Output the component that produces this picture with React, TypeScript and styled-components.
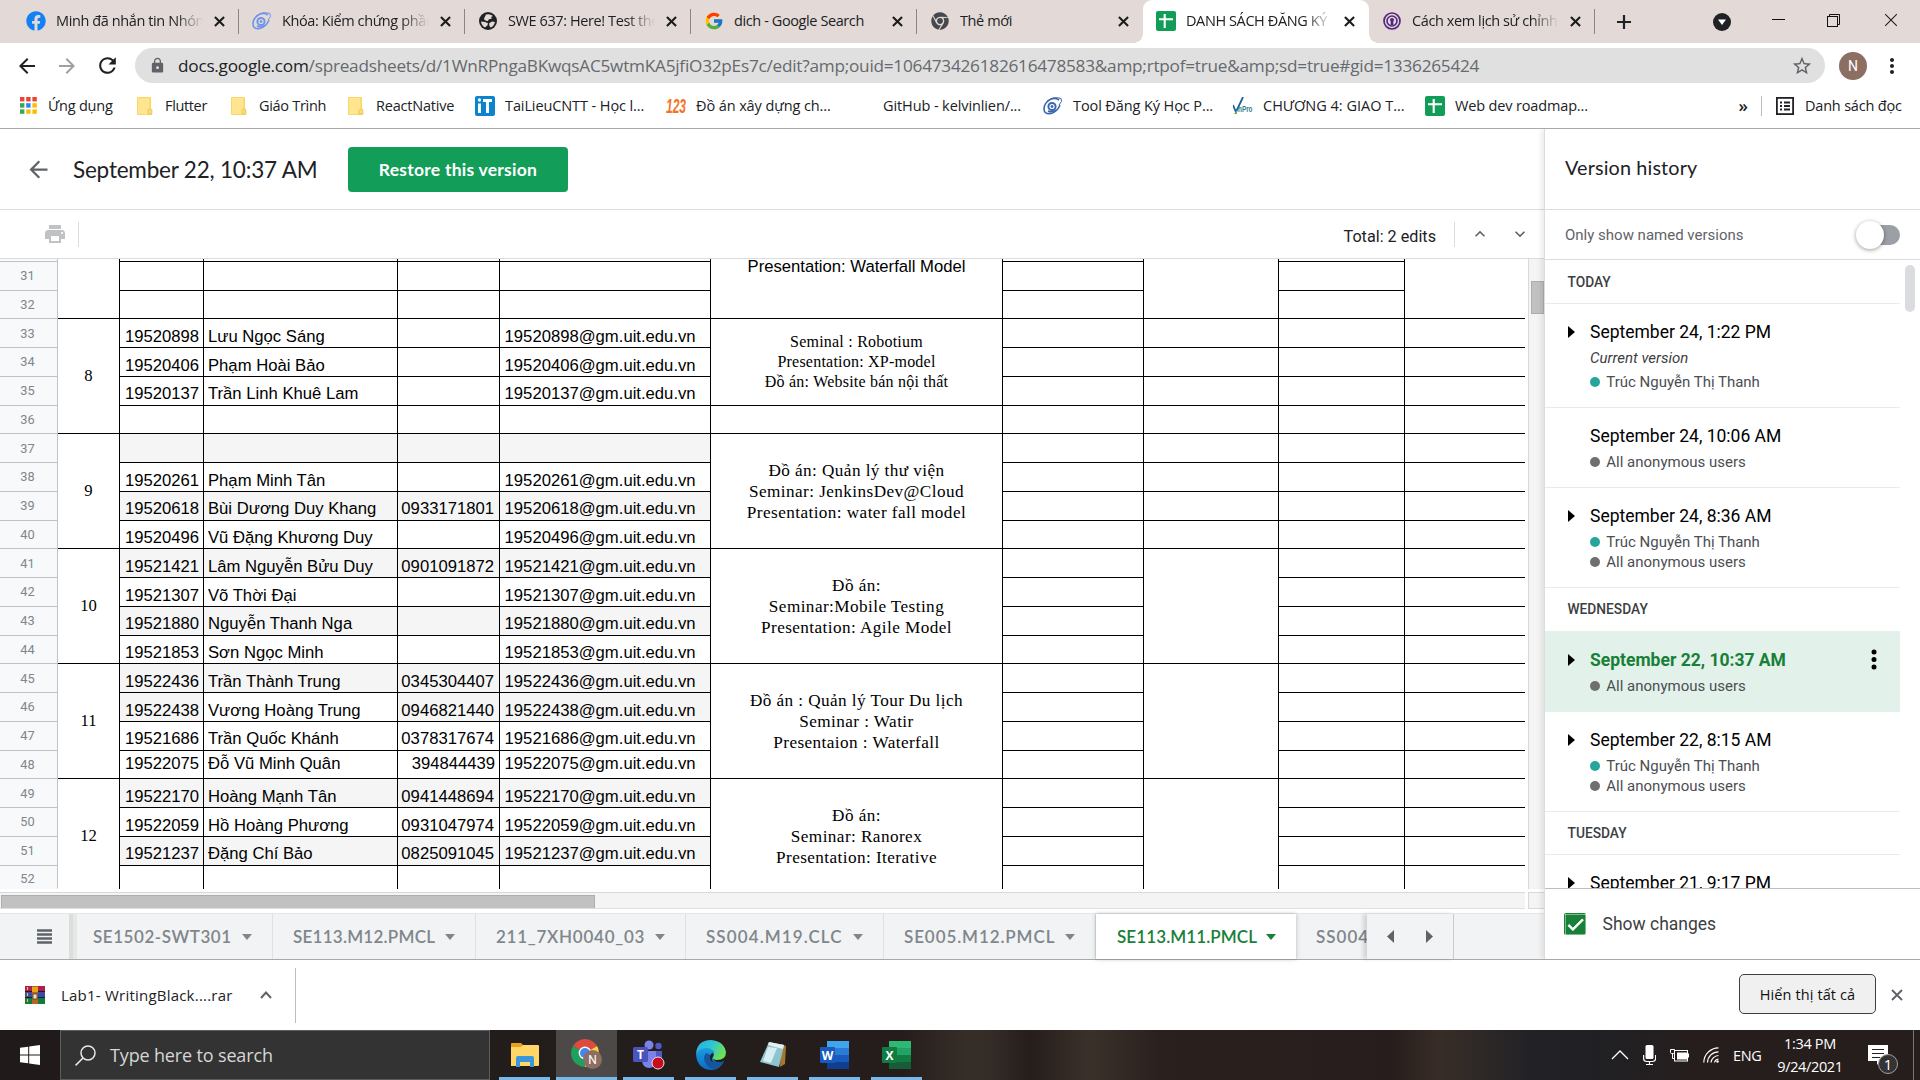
import React from "react";
import styled, { createGlobalStyle, css } from "styled-components";
import {
  MdArrowBack, MdArrowForward, MdRefresh, MdLock, MdStarBorder, MdMoreVert, MdPrint,
  MdKeyboardArrowUp, MdKeyboardArrowDown, MdCheck,
} from "react-icons/md";
import { FcGoogle } from "react-icons/fc";
import { FaFacebook, FaChrome } from "react-icons/fa";

const ui = `"Open Sans", "Noto Sans", sans-serif`;
const roboto = `Roboto, "Noto Sans", sans-serif`;
const brand = `Lato, "Open Sans", sans-serif`;
const arial = `"Liberation Sans", Arial, sans-serif`;
const times = `"Liberation Serif", "Times New Roman", serif`;

const Global = createGlobalStyle`
  * { box-sizing: border-box; }
  html, body { margin: 0; padding: 0; background: #fff; overflow: hidden; }
  svg { display: block; flex: none; }
`;

const Screen = styled.div`
  width: 1920px;
  height: 1080px;
  display: flex;
  flex-direction: column;
  overflow: hidden;
  background: #fff;
  font-family: ${ui};
  color: #202124;
  white-space: nowrap;
`;

/* ---------- browser chrome ---------- */
const TabStrip = styled.div`
  height: 43px;
  flex: none;
  display: flex;
  padding-left: 13px;
  background: #e3dad7;
`;
const BrowserTab = styled.div<{ $active?: boolean; $sep?: boolean }>`
  position: relative;
  width: 226px;
  height: 43px;
  padding: 0 9px 1px 12px;
  display: flex;
  align-items: center;
  ${(p) => p.$active && css`
    background: #fff;
    border-radius: 9px 9px 0 0;
    &::before, &::after {
      content: "";
      position: absolute;
      bottom: 0;
      width: 9px;
      height: 9px;
      background: radial-gradient(circle at 0 0, transparent 8.5px, #fff 9px);
    }
    &::before { left: -9px; }
    &::after { right: -9px; transform: scaleX(-1); }
  `}
  ${(p) => p.$sep && css`
    &::after {
      content: "";
      position: absolute;
      right: 0;
      top: 9px;
      width: 1px;
      height: 25px;
      background: #8b8684;
    }
  `}
`;
const FavBox = styled.div`
  width: 22px;
  height: 22px;
  flex: none;
  display: flex;
  align-items: center;
  justify-content: center;
  margin-right: 9px;
`;
const TabTitle = styled.div<{ $fade?: boolean }>`
  flex: 1;
  min-width: 0;
  overflow: hidden;
  font-size: 14.5px;
  line-height: 24px;
  letter-spacing: -0.4px;
  ${(p) => p.$fade && "mask-image: linear-gradient(90deg, #000 calc(100% - 28px), transparent);"}
`;
const CloseGap = styled.div`
  margin-left: 11px;
  width: 16px;
  flex: none;
`;
const WindowControls = styled.div`
  flex: 1;
  display: grid;
  grid-template-columns: 57px 103px 46px 64px 52px;
  align-items: center;
  padding-bottom: 3px;
  & > svg { justify-self: center; }
  & > svg:nth-child(2) { justify-self: end; margin: 3px 24.5px 0 0; }
  & > svg:nth-child(1) { margin-top: 3px; }
`;
const NavBar = styled.div`
  height: 45px;
  flex: none;
  display: flex;
  align-items: center;
  padding: 0 16px 0 15px;
`;
const NavBtn = styled.div<{ $dim?: boolean; $w: number }>`
  width: ${(p) => p.$w}px;
  color: ${(p) => (p.$dim ? "#a0a0a0" : "#202124")};
`;
const AddressBar = styled.div`
  width: 1690px;
  height: 35px;
  border-radius: 18px;
  background: #e0e0e0;
  display: flex;
  align-items: center;
  padding: 0 12px 0 14px;
`;
const Url = styled.div`
  flex: 1;
  margin-left: 12px;
  font-size: 17.2px;
  letter-spacing: -0.235px;
  color: #66696d;
  b { font-weight: 400; color: #202124; }
`;
const Avatar = styled.div`
  width: 28px;
  height: 28px;
  border-radius: 50%;
  background: #8d6e63;
  color: #fff;
  display: flex;
  align-items: center;
  justify-content: center;
  font: 14px ${roboto};
  margin: 0 13px 0 14px;
`;
const Bookmarks = styled.div`
  height: 41px;
  flex: none;
  display: flex;
  align-items: center;
  padding: 0 0 5px 18px;
  border-bottom: 1px solid #a9a9a9;
`;
const Bookmark = styled.div<{ $w: number; $gap?: number; $ls?: number }>`
  width: ${(p) => p.$w}px;
  flex: none;
  display: flex;
  align-items: center;
  gap: ${(p) => p.$gap ?? 10}px;
  font-size: 14.5px;
  letter-spacing: ${(p) => p.$ls ?? -0.1}px;
`;
const IconSlot = styled.div`
  width: 20px;
  display: flex;
  justify-content: center;
`;
const Overflow = styled.div`
  margin-left: auto;
  display: flex;
  align-items: center;
  font-size: 17px;
  font-weight: 600;
  line-height: 17px;
`;
const BarSep = styled.div`
  width: 1px;
  height: 20px;
  background: #bdbdbd;
  margin: 0 14px 0 13px;
`;

/* ---------- document ---------- */
const Main = styled.div`
  height: 831px;
  flex: none;
  display: flex;
  border-bottom: 1px solid #a9a9a9;
`;
const DocColumn = styled.div`
  width: 1544px;
  display: flex;
  flex-direction: column;
`;
const DocHeader = styled.div`
  height: 81px;
  flex: none;
  display: flex;
  align-items: center;
  padding: 1px 0 0 25px;
  border-bottom: 1px solid #dadce0;
  color: #5f6368;
`;
const DocTitle = styled.div`
  margin-left: 21px;
  width: 275px;
  font: 22.5px ${brand};
  letter-spacing: -0.2px;
  color: #202124;
`;
const RestoreButton = styled.button`
  width: 220px;
  height: 45px;
  border: 0;
  border-radius: 4px;
  background: #129d58;
  color: #fff;
  font: 700 17.5px ${brand};
  letter-spacing: 0.25px;
  padding: 0;
`;
const Toolbar = styled.div`
  height: 49px;
  flex: none;
  display: flex;
  align-items: center;
  border-bottom: 1px solid #dadce0;
  padding: 0 14px 0 43px;
  color: #c0c2c4;
`;
const ToolSep = styled.div<{ $ml?: number }>`
  width: 1px;
  height: 25px;
  margin-left: ${(p) => p.$ml ?? 0}px;
  background: #dadce0;
`;
const EditCount = styled.div`
  margin-left: auto;
  margin-right: 18px;
  padding-top: 4px;
  font: 16.2px ${roboto};
  color: #202124;
`;
const Chevrons = styled.div`
  display: flex;
  gap: 20px;
  margin-left: 15px;
  color: #5f6368;
`;
const SheetArea = styled.div`
  height: 630px;
  flex: none;
  display: flex;
`;
const Sheet = styled.div`
  width: 1525px;
  height: 630px;
  display: grid;
  grid-template-columns: 58px 62px 84px 194px 102px 211px 292px 141px 135px 126px 120px;
  grid-template-rows: 3px 29px 28px 29px 29px 29px 28px 29px 29px 29px 28px 29px 29px 29px 28px 29px 29px 29px 28px 29px 29px 29px 23px;
  overflow: hidden;
`;
type CellProps = { $r: number; $c: number; $span?: number };
const place = css<CellProps>`
  grid-row: ${(p) => p.$r} / span ${(p) => p.$span ?? 1};
  grid-column: ${(p) => p.$c};
`;
const RowHead = styled.div<CellProps>`
  ${place}
  background: #f8f9fa;
  border-right: 1px solid #c0c2c4;
  border-bottom: 1px solid ${(p) => (p.$r === 23 ? "#f8f9fa" : "#c0c2c4")};
  color: #80868b;
  font: 12.8px ${roboto};
  display: flex;
  justify-content: center;
  align-items: center;
  padding: ${(p) => (p.$r === 23 ? 3 : 0)}px 2px ${(p) => ([3, 2].includes((p.$r + 29) % 4) && p.$r !== 3 ? 2 : 0)}px 0;
  overflow: hidden;
`;
const Cell = styled.div<CellProps & { $grey?: boolean; $right?: boolean; $mid?: boolean; $lift?: boolean }>`
  ${place}
  min-height: 0;
  overflow: hidden;
  border-right: ${(p) => (p.$c === 11 ? 0 : 1)}px solid #000;
  border-bottom: ${(p) => (p.$r === 23 ? 0 : 1)}px solid #000;
  background: ${(p) => (p.$grey ? "#f5f5f5" : "#fff")};
  color: #000;
  font: 16.67px/20px ${arial};
  display: flex;
  align-items: ${(p) => (p.$mid ? "center" : "flex-end")};
  justify-content: ${(p) => (p.$right ? "flex-end" : "flex-start")};
  padding: 0 ${(p) => (p.$c === 5 && !p.$mid ? 5 : 4)}px ${(p) => (p.$mid || p.$lift ? 1 : 0)}px ${(p) => (p.$c === 6 ? 4.6 : 4)}px;
`;
const Merged = styled.div<CellProps & { $size?: number; $lh?: number; $ls?: number; $open?: boolean; $sans?: boolean; $top?: boolean; $up?: boolean }>`
  ${place}
  min-height: 0;
  overflow: hidden;
  border-right: 1px solid #000;
  border-bottom: ${(p) => (p.$open ? 0 : 1)}px solid #000;
  background: #fff;
  color: #000;
  display: flex;
  flex-direction: column;
  align-items: center;
  justify-content: ${(p) => (p.$top ? "flex-start" : "center")};
  font-family: ${(p) => (p.$sans ? arial : times)};
  font-size: ${(p) => p.$size ?? 16.67}px;
  line-height: ${(p) => p.$lh ?? 21}px;
  letter-spacing: ${(p) => p.$ls ?? 0}px;
  padding-bottom: ${(p) => (p.$up ? 2 : 0)}px;
  padding-top: ${(p) => (p.$open ? 4 : 0)}px;
`;
const VTrack = styled.div`
  width: 16px;
  margin-left: 3px;
  border-left: 1px solid #d9d9d9;
  background: #f4f4f4;
  padding: 22px 0 0 2px;
`;
const VThumb = styled.div`
  height: 33px;
  background: #c1c1c1;
  border: 1px solid #aeaeae;
`;
const HScroll = styled.div`
  height: 24px;
  flex: none;
  display: flex;
  padding: 3px 0 4px;
`;
const HTrack = styled.div`
  width: 1525px;
  border-top: 1px solid #d9d9d9;
  border-bottom: 1px solid #e0e0e0;
  background: #f4f4f4;
  padding: 2px 0 0 1px;
`;
const HThumb = styled.div`
  width: 594px;
  height: 13px;
  background: #c1c1c1;
  border: 1px solid #aeaeae;
  border-bottom: 0;
`;
const ScrollCorner = styled.div`
  margin-left: 3px;
  width: 16px;
  background: #f4f4f4;
  border: 1px solid #d9d9d9;
  border-right: 0;
`;
const SheetTabs = styled.div`
  flex: 1;
  display: flex;
  background: #f1f3f4;
  border-top: 1px solid #e4e6e8;
`;
const AllSheets = styled.div`
  width: 77px;
  flex: none;
  padding-left: 37px;
  display: flex;
  align-items: center;
  background: linear-gradient(90deg, #dcdedd 50%, #e6e8e8 50%) right / 8px 100% no-repeat;
`;
const SheetTab = styled.div<{ $w: number; $active?: boolean; $ls?: number; $cut?: boolean; $pl?: number }>`
  width: ${(p) => p.$w}px;
  flex: none;
  overflow: hidden;
  display: flex;
  align-items: center;
  justify-content: space-between;
  padding: 0 ${(p) => (p.$cut ? 0 : 20)}px 0 ${(p) => p.$pl ?? 20}px;
  font: 600 17px ${brand};
  letter-spacing: ${(p) => p.$ls ?? 0}px;
  color: ${(p) => (p.$active ? "#188038" : "#80868b")};
  background: ${(p) => (p.$active ? "#fff" : "transparent")};
  border-right: ${(p) => (p.$cut || p.$active ? 0 : 1)}px solid #dfe1e5;
  box-shadow: ${(p) => (p.$active ? "0 0 4px rgba(60,64,67,.35)" : "none")};
`;
const SheetArrows = styled.div`
  width: 87px;
  display: flex;
  align-items: center;
  padding-left: 20px;
  gap: 32px;
  border-right: 1px solid #c9cbce;
  box-shadow: -4px 0 4px rgba(60,64,67,.16);
  background: #f1f3f4;
`;

/* ---------- version history ---------- */
const Panel = styled.aside`
  width: 376px;
  display: flex;
  flex-direction: column;
  border-left: 1px solid #dcdcdc;
  box-shadow: -2px 0 6px rgba(0, 0, 0, 0.1);
  background: #fff;
  font-family: ${roboto};
  clip-path: inset(0 0 0 -10px);
`;
const PanelTitle = styled.div`
  height: 81px;
  flex: none;
  border-bottom: 1px solid #dadce0;
  padding: 0 0 4px 20px;
  display: flex;
  align-items: center;
  font: 19.8px ${brand};
  letter-spacing: 0.15px;
  color: #202124;
`;
const NamedRow = styled.div`
  height: 50px;
  flex: none;
  border-bottom: 1px solid #dadce0;
  display: flex;
  align-items: center;
  justify-content: space-between;
  padding: 0 20px 0 20px;
  font-size: 15px;
  color: #5f6368;
`;
const Switch = styled.div`
  width: 34px;
  height: 20px;
  border-radius: 10px;
  background: #9aa0a6;
  display: flex;
  align-items: center;
  &::before {
    content: "";
    flex: none;
    width: 28px;
    height: 28px;
    margin-left: -10px;
    border-radius: 50%;
    background: #fff;
    box-shadow: 0 1px 4px rgba(0, 0, 0, 0.4);
  }
`;
const ListArea = styled.div`
  height: 628px;
  flex: none;
  display: flex;
  overflow: hidden;
`;
const List = styled.div`
  width: 355px;
`;
const Thumb = styled.div`
  width: 10px;
  height: 47px;
  margin: 5px 0 0 5px;
  border-radius: 5px;
  background: #dadce0;
`;
const Day = styled.div<{ $h: number; $line?: boolean }>`
  height: ${(p) => p.$h}px;
  padding: 0 0 ${(p) => (p.$line ? 0 : 1)}px 22.5px;
  display: flex;
  align-items: center;
  font-size: 13.75px;
  font-weight: 500;
  color: #3c4043;
  border-bottom: ${(p) => (p.$line ? 1 : 0)}px solid #e8eaed;
`;
const Version = styled.div<{ $sel?: boolean }>`
  padding: ${(p) => (p.$sel ? 17 : 16)}px 19px 15px 23px;
  display: grid;
  grid-template-columns: 22px 1fr auto;
  border-bottom: 1px solid ${(p) => (p.$sel ? "#e2f2ea" : "#e8eaed")};
  background: ${(p) => (p.$sel ? "#e2f2ea" : "#fff")};
`;
const Arrow = styled.div<{ $show?: boolean }>`
  margin-top: 6px;
  width: 0;
  height: 0;
  border: 6px solid transparent;
  border-left: 7px solid ${(p) => (p.$show ? "#000" : "transparent")};
  border-right: 0;
`;
const VersionBody = styled.div`
  display: flex;
  flex-direction: column;
`;
const VersionDate = styled.div<{ $sel?: boolean }>`
  height: 24px;
  margin-bottom: 4px;
  line-height: 24px;
  font-size: 17.5px;
  font-weight: ${(p) => (p.$sel ? 700 : 400)};
  color: ${(p) => (p.$sel ? "#188038" : "#000")};
`;
const Current = styled.div`
  height: 20px;
  margin-bottom: 4px;
  font: italic 15px/20px ${roboto};
  color: #3c4043;
`;
const Editor = styled.div<{ $teal?: boolean }>`
  height: 20px;
  display: flex;
  align-items: center;
  gap: 6.3px;
  font-size: 15px;
  color: #4b4e52;
  &::before {
    content: "";
    width: 10px;
    height: 10px;
    border-radius: 50%;
    background: ${(p) => (p.$teal ? "#26a69a" : "#6f6f6f")};
  }
`;
const PanelFooter = styled.div`
  flex: 1;
  border-top: 1px solid #bdbdbd;
  display: flex;
  align-items: center;
  gap: 16.5px;
  padding-left: 19px;
  font-size: 17.5px;
  color: #3c4043;
`;
const CheckBox = styled.div`
  width: 22px;
  height: 22px;
  border-radius: 2px;
  background: #188038;
  color: #fff;
  display: flex;
  align-items: center;
  justify-content: center;
`;

/* ---------- download shelf ---------- */
const Shelf = styled.div`
  height: 70px;
  flex: none;
  display: flex;
  align-items: center;
  padding: 0 17px 0 25px;
`;
const FileName = styled.div`
  margin-left: 16px;
  width: 199px;
  font-size: 15px;
  letter-spacing: 0.22px;
`;
const ShelfSep = styled.div`
  width: 1px;
  height: 55px;
  background: #bdbdbd;
  margin-left: 23px;
`;
const ShowAll = styled.button`
  margin-left: auto;
  width: 137px;
  height: 40px;
  border: 1px solid #3f3f3f;
  border-radius: 5px;
  background: #f0f0f0;
  font: 14.5px ${ui};
  letter-spacing: 0.12px;
  color: #111;
  margin-right: 15px;
  padding: 0;
  margin-bottom: 2px;
`;

/* ---------- task bar ---------- */
const TaskBar = styled.div`
  height: 50px;
  flex: none;
  display: flex;
  background: linear-gradient(90deg, #201b1a 0, #231d1c 640px, #241d1b 900px, #352d27 965px, #342c27 990px, #261e1b 1030px, #3a312b 1090px, #2a211f 1160px, #261d1c 1390px, #382d27 1440px, #222226 1530px, #202024 1600px, #261e1d 1690px, #261e1c 1900px);
  color: #fff;
`;
const Start = styled.div`
  width: 60px;
  padding-left: 20px;
  display: flex;
  align-items: center;
`;
const Search = styled.div`
  width: 430px;
  background: #333;
  border: 1px solid #5c5c5c;
  display: flex;
  align-items: center;
  gap: 14px;
  padding-left: 14px;
  font-size: 18px;
  letter-spacing: -0.15px;
  color: #d6d6d6;
`;
const Apps = styled.div`
  display: flex;
  margin-left: 9px;
`;
const AppCell = styled.div<{ $active?: boolean }>`
  width: ${(p) => (p.$active ? 61 : 51)}px;
  margin-right: ${(p) => (p.$active ? 6 : 11)}px;
  &:first-child { margin-right: 6px; }
  display: flex;
  align-items: center;
  justify-content: center;
  padding-top: 3px;
  background: ${(p) => (p.$active ? "#4d4948" : "transparent")};
  border-bottom: 3px solid #76b9ed;
`;
const Tray = styled.div`
  margin-left: auto;
  width: 320px;
  padding-left: 11px;
  display: flex;
  align-items: center;
`;
const TrayIcon = styled.div<{ $w: number }>`
  width: ${(p) => p.$w}px;
  flex: none;
`;
const Lang = styled.div`
  width: 34px;
  font-size: 14.5px;
  letter-spacing: -0.4px;
`;
const Clock = styled.div`
  width: 86px;
  text-align: center;
  font-size: 14.5px;
  line-height: 23px;
  letter-spacing: -0.35px;
`;
const Notice = styled.div`
  position: relative;
  width: 28px;
  height: 50px;
  margin-left: 15px;
`;
const NoticeBadge = styled.div`
  position: absolute;
  left: 10px;
  top: 24px;
  width: 20px;
  height: 20px;
  border-radius: 50%;
  border: 1px solid #a0a0a0;
  background: #333;
  font-size: 15px;
  line-height: 18px;
  text-align: center;
`;
const DesktopEdge = styled.div`
  width: 1px;
  height: 50px;
  margin-left: 17px;
  background: #777;
`;

/* ---------- drawings ---------- */
const Cross = ({ s = 11, w = 2.3, c = "#1d1d1d" }) => (
  <svg width={s} height={s} viewBox="0 0 12 12"><path d="M1 1l10 10M11 1L1 11" stroke={c} strokeWidth={w} /></svg>
);
const SheetsIcon = () => (
  <svg width="20" height="20" viewBox="0 0 20 20">
    <rect width="20" height="20" rx="2" fill="#119d58" />
    <path d="M8.7 3v14M3 8.2h14" stroke="#fff" strokeWidth="2.1" />
  </svg>
);
const Folder = () => (
  <svg width="16" height="18" viewBox="0 0 16 18">
    <path d="M1 0h12q1 0 1 1v11l1 1v4q0 1-1 1H1q-1 0-1-1V1q0-1 1-1z" fill="#f7d867" />
    <path d="M1 1h11.5v16H1z" fill="#ffe58f" />
    <path d="M11 17v-4q0-1 2-1t2 1v4z" fill="#fbdc70" stroke="#e6bd4a" strokeWidth=".6" />
  </svg>
);
const AppsIcon = () => (
  <svg width="17" height="17" viewBox="0 0 17 17">
    {["#ea4335", "#ea4335", "#ea4335", "#34a853", "#2a86f3", "#fbbc05", "#34a853", "#fbbc05", "#fbbc05"].map((c, i) => (
      <rect key={i} x={(i % 3) * 6.2} y={Math.floor(i / 3) * 6.2} width="4.4" height="4.4" fill={c} />
    ))}
  </svg>
);
const Orbit = ({ c }: { c: string }) => (
  <svg width="20" height="18" viewBox="0 0 20 18" fill="none" stroke={c}>
    <path d="M17 8Q14 15 8 16.5Q1 17.5 1 12Q1 6 7 2.600Q12 0 16 3" strokeWidth="1.6" />
    <path d="M4 4Q11-1 18 1.500Q20 4 16 8" strokeWidth="1" />
    <circle cx="9" cy="9.500" r="3.600" strokeWidth="2" />
    <circle cx="9" cy="9.500" r="1" fill={c} />
    <path d="M5 14q4 2 8-1" strokeWidth="1.400" />
  </svg>
);
const Globe = () => (
  <svg width="18" height="18" viewBox="0 0 18 18">
    <circle cx="9" cy="9" r="9" fill="#202124" />
    <path d="M7 2.500Q11 1.500 14 4l-2 1 1 1.500-3 .8-1.500 2L5.500 8 5 6.500zM2 9.500l4 .6 3 1.200-.5 2L6 15.500Q2.500 13.500 2 9.500zM10 11.500l3-2 3 .5q-.8 4-4.500 5.600L10.500 14z" fill="#e3dad7" />
  </svg>
);
const ItIcon = () => (
  <svg width="20" height="20" viewBox="0 0 20 20">
    <rect width="20" height="20" rx="2" fill="#0a84cc" />
    <path d="M4.500 7.500V17M8 4.500h9M12.500 4.500V17" stroke="#fff" strokeWidth="3" />
    <circle cx="4.500" cy="4" r="1.700" fill="#fff" />
  </svg>
);
const Icon123 = () => (
  <svg width="20" height="18" viewBox="0 0 20 18">
    <text x="0" y="16" fontFamily="Liberation Sans, sans-serif" fontWeight="700" fontStyle="italic" fontSize="20" fill="#f37427" textLength="20" lengthAdjust="spacingAndGlyphs">123</text>
  </svg>
);
const VnPro = () => (
  <svg width="20" height="18" viewBox="0 0 20 18">
    <path d="M0 8l3 7L10 0" fill="none" stroke="#1c5f95" strokeWidth="1.800" />
    <path d="M1 17l3-4v4z" fill="#6cb33f" />
    <text x="5" y="15" fontFamily="Liberation Sans, sans-serif" fontWeight="700" fontSize="9" fill="#2f7f8f" textLength="14.500" lengthAdjust="spacingAndGlyphs">nPro</text>
  </svg>
);
const PurpleIcon = () => (
  <svg width="18" height="18" viewBox="0 0 18 18" fill="none" stroke="#542583">
    <circle cx="9" cy="9" r="8" strokeWidth="1.700" />
    <circle cx="9" cy="9" r="5" strokeWidth="1.600" />
    <circle cx="9" cy="8" r="2" fill="#542583" stroke="none" /><path d="M8 9h2l.6 4H7.400z" fill="#542583" stroke="none" />
  </svg>
);
const ReadingList = () => (
  <svg width="18" height="18" viewBox="0 0 18 18" fill="none" stroke="#202124" strokeWidth="1.800">
    <rect x=".9" y=".9" width="16.200" height="16.200" />
    <path d="M4 5.500h2M8 5.500h6M4 9h2M8 9h6M4 12.500h2M8 12.500h6" />
  </svg>
);
const RarIcon = () => (
  <svg width="20" height="18" viewBox="0 0 20 18">
    <rect width="20" height="6" fill="#b01e4c" /><rect y="6" width="20" height="6" fill="#3c49a5" /><rect y="12" width="20" height="6" fill="#127a3c" />
    <path d="M0 5.500h20M0 11.500h20" stroke="#1b1b2b" />
    <rect x="7" width="6" height="18" fill="#b5651d" /><path d="M7 1h6v5H7z" fill="#e8a317" />
    <rect x="8" y="8" width="4" height="5" fill="#e9e2d0" stroke="#444" strokeWidth=".8" />
    <path d="M2.500 1v3M2.500 7v3M2.500 13v3" stroke="#f4c430" strokeWidth="1.200" />
  </svg>
);
const WinLogo = () => (
  <svg width="20" height="20" viewBox="0 0 20 20" fill="#fff">
    <path d="M0 2.800L8.200 1.700v7.800H0zM9.200 1.500L20 0v9.500H9.200zM0 10.500h8.200v7.800L0 17.200zM9.200 10.500H20V20L9.200 18.500z" />
  </svg>
);
const Explorer = () => (
  <svg width="28" height="24" viewBox="0 0 28 24">
    <path d="M0 1q0-1 1-1h9l3 3v4H0z" fill="#e5a21a" />
    <path d="M0 4h10l2-2h15q1 0 1 1v19q0 1-1 1H0z" fill="#ffd667" />
    <path d="M5 24v-9q0-2 2-2h14q2 0 2 2v9h-4v-5H9v5z" fill="#3a97dc" />
  </svg>
);
const Chrome = () => (
  <svg width="32" height="32" viewBox="0 0 32 32">
    <path d="M14 14L1.900 7A14 14 0 0 1 26.100 7z" fill="#de4b3e" />
    <path d="M14 14L1.900 7A14 14 0 0 0 14 28z" fill="#1fa15d" />
    <path d="M14 14l12.100-7A14 14 0 0 1 14 28z" fill="#fdcf41" />
    <circle cx="14" cy="14" r="6.400" fill="#fff" /><circle cx="14" cy="14" r="5" fill="#4285f4" />
    <circle cx="21.500" cy="20.500" r="9.500" fill="#8d6e63" />
    <text x="21.500" y="25" textAnchor="middle" fontFamily="Roboto, sans-serif" fontSize="12" fill="#fff">N</text>
  </svg>
);
const Teams = () => (
  <svg width="32" height="30" viewBox="0 0 32 30">
    <circle cx="16" cy="5" r="4.500" fill="#7b83eb" /><circle cx="25.500" cy="6" r="3.200" fill="#5059c9" />
    <path d="M20 11h9v10q-1 5-7 4z" fill="#5059c9" /><path d="M9 11h14v10q-1 7-7 7t-7-7z" fill="#7b83eb" />
    <rect y="7" width="15" height="15" rx="1.500" fill="#4b53bc" />
    <text x="7.500" y="19" textAnchor="middle" fontFamily="Open Sans, sans-serif" fontWeight="700" fontSize="12" fill="#fff">T</text>
    <circle cx="25" cy="23" r="6" fill="#c50f1f" stroke="#f1dede" strokeWidth="1" />
  </svg>
);
const Edge = () => (
  <svg width="30" height="30" viewBox="0 0 30 30">
    <defs>
      <linearGradient id="edgeTop" x1="0" y1="0" x2="1" y2=".4"><stop offset="0" stopColor="#2fa9e8" /><stop offset=".55" stopColor="#2fc6d0" /><stop offset="1" stopColor="#6be05a" /></linearGradient>
      <linearGradient id="edgeLow" x1="0" y1="0" x2="0" y2="1"><stop offset="0" stopColor="#1b9de2" /><stop offset="1" stopColor="#0b6cc4" /></linearGradient>
    </defs>
    <path d="M0 14Q1 0 15 0q13 1 15 12 0 8-9 8-5 0-4-3 2-3 0-6Q9 6 0 14z" fill="url(#edgeTop)" />
    <path d="M0 14q3-6 10-6 6 0 8 5 0 3-1 4-1 3 4 5 4 1 7-1-4 9-13 9Q1 29 0 14z" fill="url(#edgeLow)" />
    <path d="M10 13q-4 5 0 11 3 5 9 5 6-2 9-8-3 2-8 1-5-1-5-5 0-3-5-4z" fill="#15559d" />
    <path d="M14.500 15q-1 1.500-.5 3.500.5 2.500 3 3.500-2-3-.3-5 1.400-2 .3-4-1.500 0-2.500 2z" fill="#231d1c" />
  </svg>
);
const Notepad = () => (
  <svg width="28" height="28" viewBox="0 0 28 28">
    <path d="M22 3l5 2-1 18-5 3z" fill="#a6772f" />
    <path d="M10 1l15 3-5 22L1 21z" fill="#8fc3cd" /><path d="M10 1l15 3-1 4L9 4z" fill="#e8eef0" />
    <path d="M9 6L4 20l8 2 6-15z" fill="#d6eef2" />
  </svg>
);
const Office = ({ l, a }: { l: string; a: string[] }) => (
  <svg width="29" height="28" viewBox="0 0 29 28">
    {a.slice(0, 4).map((c, i) => <rect key={i} x="7" y={i * 7} width="22" height="7" fill={c} />)}
    <rect x="0" y="6" width="15" height="16" rx="1" fill={a[4]} />
    <text x="7.500" y="18.500" textAnchor="middle" fontFamily="Open Sans, sans-serif" fontWeight="700" fontSize="12" fill="#fff">{l}</text>
  </svg>
);
const Tri = ({ d, c, w = 10, h = 6 }: { d: string; c: string; w?: number; h?: number }) => (
  <svg width={w} height={h} viewBox={`0 0 ${w} ${h}`}><path d={d} fill={c} /></svg>
);

/* ---------- data ---------- */
const rows: [number, string, string, string, boolean][] = [
  [31, "", "", "", false], [32, "", "", "", false],
  [33, "19520898", "Lưu Ngọc Sáng", "", false],
  [34, "19520406", "Phạm Hoài Bảo", "", false],
  [35, "19520137", "Trần Linh Khuê Lam", "", false],
  [36, "", "", "", false],
  [37, "", "", "", true],
  [38, "19520261", "Phạm Minh Tân", "", false],
  [39, "19520618", "Bùi Dương Duy Khang", "0933171801", true],
  [40, "19520496", "Vũ Đặng Khương Duy", "", false],
  [41, "19521421", "Lâm Nguyễn Bửu Duy", "0901091872", true],
  [42, "19521307", "Võ Thời Đại", "", false],
  [43, "19521880", "Nguyễn Thanh Nga", "", true],
  [44, "19521853", "Sơn Ngọc Minh", "", false],
  [45, "19522436", "Trần Thành Trung", "0345304407", true],
  [46, "19522438", "Vương Hoàng Trung", "0946821440", true],
  [47, "19521686", "Trần Quốc Khánh", "0378317674", false],
  [48, "19522075", "Đỗ Vũ Minh Quân", "394844439", false],
  [49, "19522170", "Hoàng Mạnh Tân", "0941448694", true],
  [50, "19522059", "Hồ Hoàng Phương", "0931047974", false],
  [51, "19521237", "Đặng Chí Bảo", "0825091045", true],
  [52, "", "", "", false],
];
const groups: [string, number, number][] = [["", 1, 3], ["8", 4, 4], ["9", 8, 4], ["10", 12, 4], ["11", 16, 4], ["12", 20, 4]];
const topics: { r: number; n: number; t: string[]; size?: number; lh?: number; ls?: number }[] = [
  { r: 4, n: 3, t: ["Seminal : Robotium", "Presentation: XP-model", "Đồ án: Website bán nội thất"], size: 16, lh: 20, ls: 0.22 },
  { r: 7, n: 1, t: [] },
  { r: 8, n: 4, t: ["Đồ án: Quản lý thư viện", "Seminar: JenkinsDev@Cloud", "Presentation: water fall model"] },
  { r: 12, n: 4, t: ["Đồ án:", "Seminar:Mobile Testing", "Presentation: Agile Model"] },
  { r: 16, n: 4, t: ["Đồ án : Quản lý Tour Du lịch", "Seminar : Watir", "Presentaion : Waterfall"] },
  { r: 20, n: 4, t: ["Đồ án:", "Seminar: Ranorex", "Presentation: Iterative"] },
];
const allRows = Array.from({ length: 23 }, (_, i) => i + 1);
const TRUC = "Trúc Nguyễn Thị Thanh";
const ANON = "All anonymous users";

const Entry = ({ date, who, sel, arrow = true, current }: { date: string; who: string[]; sel?: boolean; arrow?: boolean; current?: boolean }) => (
  <Version $sel={sel}>
    <Arrow $show={arrow} />
    <VersionBody>
      <VersionDate $sel={sel}>{date}</VersionDate>
      {current && <Current>Current version</Current>}
      {who.map((w) => <Editor key={w} $teal={w === TRUC}>{w}</Editor>)}
    </VersionBody>
    {sel && (
      <svg width="14" height="24" viewBox="0 0 14 24"><circle cx="7" cy="4" r="2.500" /><circle cx="7" cy="11.500" r="2.500" /><circle cx="7" cy="19" r="2.500" /></svg>
    )}
  </Version>
);

const Tab = ({ icon, children, active, sep, fade }: { icon: React.ReactNode; children: React.ReactNode; active?: boolean; sep?: boolean; fade?: boolean }) => (
  <BrowserTab $active={active} $sep={sep}>
    <FavBox>{icon}</FavBox>
    <TabTitle $fade={fade}>{children}</TabTitle>
    <CloseGap><Cross /></CloseGap>
  </BrowserTab>
);

const sheetTabs: { t: string; w: number; ls: number; pl?: number; active?: boolean }[] = [
  { t: "SE1502-SWT301", w: 196, ls: 0.55, pl: 16 },
  { t: "SE113.M12.PMCL", w: 203, ls: 0.25 },
  { t: "211_7XH0040_03", w: 210, ls: 0.75 },
  { t: "SS004.M19.CLC", w: 198, ls: 1.1 },
  { t: "SE005.M12.PMCL", w: 212, ls: 0.9 },
  { t: "SE113.M11.PMCL", w: 200, ls: 0.1, pl: 21, active: true },
];

export default function App() {
  return (
    <Screen>
      <Global />
      <TabStrip>
        <Tab icon={<FaFacebook size={20} color="#1480f5" />} sep fade>Minh đã nhắn tin Nhóm</Tab>
        <Tab icon={<Orbit c="#6f95ea" />} sep fade>Khóa: Kiểm chứng phần</Tab>
        <Tab icon={<Globe />} sep fade>SWE 637: Here! Test the</Tab>
        <Tab icon={<FcGoogle size={20} />} sep>dich - Google Search</Tab>
        <Tab icon={<FaChrome size={18} color="#45484c" />}>Thẻ mới</Tab>
        <Tab icon={<SheetsIcon />} active fade>DANH SÁCH ĐĂNG KÝ</Tab>
        <Tab icon={<PurpleIcon />} sep fade>Cách xem lịch sử chỉnh</Tab>
        <WindowControls>
          <svg width="14" height="14" viewBox="0 0 14 14"><path d="M7 0v14M0 7h14" stroke="#202124" strokeWidth="2.200" /></svg>
          <svg width="18" height="18" viewBox="0 0 18 18"><circle cx="9" cy="9" r="9" fill="#202124" /><path d="M5 6.500h8L9 12z" fill="#fff" /></svg>
          <svg width="13" height="2"><path d="M0 .5h13" stroke="#111" /></svg>
          <svg width="13" height="13" viewBox="0 0 13 13" fill="none" stroke="#111"><rect x=".5" y="2.500" width="10" height="10" /><path d="M2.500 2.500v-2h10v10h-2" /></svg>
          <Cross s={14} w={0.9} />
        </WindowControls>
      </TabStrip>

      <NavBar>
        <NavBtn $w={40}><MdArrowBack size={24} /></NavBtn>
        <NavBtn $w={40} $dim><MdArrowForward size={24} /></NavBtn>
        <NavBtn $w={40}><MdRefresh size={25} /></NavBtn>
        <AddressBar>
          <MdLock size={17} color="#5f6368" />
          <Url><b>docs.google.com</b>/spreadsheets/d/1WnRPngaBKwqsAC5wtmKA5jfiO32pEs7c/edit?amp;ouid=106473426182616478583&amp;amp;rtpof=true&amp;amp;sd=true#gid=1336265424</Url>
          <MdStarBorder size={22} color="#5f6368" />
        </AddressBar>
        <Avatar>N</Avatar>
        <MdMoreVert size={24} />
      </NavBar>

      <Bookmarks>
        <Bookmark $w={117} $ls={-0.2}><IconSlot><AppsIcon /></IconSlot>Ứng dụng</Bookmark>
        <Bookmark $w={94} $ls={-0.35}><IconSlot><Folder /></IconSlot>Flutter</Bookmark>
        <Bookmark $w={117} $ls={-0.3}><IconSlot><Folder /></IconSlot>Giáo Trình</Bookmark>
        <Bookmark $w={129} $ls={-0.2}><IconSlot><Folder /></IconSlot>ReactNative</Bookmark>
        <Bookmark $w={191}><IconSlot><ItIcon /></IconSlot>TaiLieuCNTT - Học l...</Bookmark>
        <Bookmark $w={187}><IconSlot><Icon123 /></IconSlot>Đồ án xây dựng ch...</Bookmark>
        <Bookmark $w={190}><IconSlot />GitHub - kelvinlien/...</Bookmark>
        <Bookmark $w={190}><IconSlot><Orbit c="#3c66b0" /></IconSlot>Tool Đăng Ký Học P...</Bookmark>
        <Bookmark $w={192} $ls={0}><IconSlot><VnPro /></IconSlot>CHƯƠNG 4: GIAO T...</Bookmark>
        <Bookmark $w={180} $ls={-0.15}><IconSlot><SheetsIcon /></IconSlot>Web dev roadmap...</Bookmark>
        <Overflow>»<BarSep /></Overflow>
        <Bookmark $w={144} $gap={11} $ls={-0.2}><ReadingList />Danh sách đọc</Bookmark>
      </Bookmarks>

      <Main>
        <DocColumn>
          <DocHeader>
            <MdArrowBack size={27} />
            <DocTitle>September 22, 10:37 AM</DocTitle>
            <RestoreButton>Restore this version</RestoreButton>
          </DocHeader>
          <Toolbar>
            <MdPrint size={24} />
            <ToolSep $ml={11} />
            <EditCount>Total: 2 edits</EditCount>
            <ToolSep />
            <Chevrons><MdKeyboardArrowUp size={20} /><MdKeyboardArrowDown size={20} /></Chevrons>
          </Toolbar>
          <SheetArea>
            <Sheet>
              {allRows.map((r) => <RowHead key={r} $r={r} $c={1}>{r > 1 ? r + 29 : ""}</RowHead>)}
              {groups.map(([t, r, n]) => <Merged key={r} $r={r} $c={2} $span={n} $open={r === 20} $up>{t}</Merged>)}
              {[3, 4, 5, 6].map((c) => <Cell key={c} $r={1} $c={c} />)}
              {rows.map(([n, id, name, phone, grey]) => {
                const r = n - 29;
                const look = { $r: r, $mid: n === 48, $lift: n % 4 === 3 };
                return (
                  <React.Fragment key={n}>
                    <Cell {...look} $c={3} $grey={grey} $right>{id}</Cell>
                    <Cell {...look} $c={4} $grey={grey && n !== 46}>{name}</Cell>
                    <Cell {...look} $c={5} $grey={grey} $right>{phone}</Cell>
                    <Cell {...look} $c={6} $grey={grey}>{id && `${id}@gm.uit.edu.vn`}</Cell>
                  </React.Fragment>
                );
              })}
              <Merged $r={1} $c={7} $span={3} $sans $lh={16} $top>Presentation: Waterfall Model</Merged>
              {topics.map((t) => (
                <Merged key={t.r} $r={t.r} $c={7} $span={t.n} $size={t.size ?? 17.2} $ls={t.ls ?? 0.42} $lh={t.lh} $open={t.r === 20}>
                  {t.t.map((line) => <div key={line}>{line}</div>)}
                </Merged>
              ))}
              {allRows.map((r) => <Cell key={`g${r}`} $r={r} $c={8} />)}
              <Merged $r={1} $c={9} $span={3} />
              {allRows.slice(3, 11).map((r) => <Cell key={`h${r}`} $r={r} $c={9} />)}
              <Merged $r={12} $c={9} $span={4} />
              <Merged $r={16} $c={9} $span={4} />
              <Merged $r={20} $c={9} $span={4} $open />
              {allRows.map((r) => <Cell key={`i${r}`} $r={r} $c={10} />)}
              <Cell $r={1} $c={11} $span={3} />
              {allRows.slice(3).map((r) => <Cell key={`j${r}`} $r={r} $c={11} />)}
            </Sheet>
            <VTrack><VThumb /></VTrack>
          </SheetArea>
          <HScroll>
            <HTrack><HThumb /></HTrack>
            <ScrollCorner />
          </HScroll>
          <SheetTabs>
            <AllSheets>
              <svg width="15" height="15" viewBox="0 0 15 15"><path d="M0 1.500h15M0 5.500h15M0 9.500h15M0 13.500h15" stroke="#5f6368" strokeWidth="2.400" /></svg>
            </AllSheets>
            {sheetTabs.map((s) => (
              <SheetTab key={s.t} $w={s.w} $ls={s.ls} $pl={s.pl} $active={s.active}>
                {s.t}
                <Tri d="M0 0h10L5 6z" c={s.active ? "#188038" : "#80868b"} />
              </SheetTab>
            ))}
            <SheetTab $w={71} $ls={1} $cut>SS004.M19</SheetTab>
            <SheetArrows>
              <Tri d="M7 0v13L0 6.500z" c="#5f6368" w={7} h={13} />
              <Tri d="M0 0v13l7-6.500z" c="#5f6368" w={7} h={13} />
            </SheetArrows>
          </SheetTabs>
        </DocColumn>

        <Panel>
          <PanelTitle>Version history</PanelTitle>
          <NamedRow>Only show named versions<Switch /></NamedRow>
          <ListArea>
            <List>
              <Day $h={44} $line>TODAY</Day>
              <Entry date="September 24, 1:22 PM" who={[TRUC]} current />
              <Entry date="September 24, 10:06 AM" who={[ANON]} arrow={false} />
              <Entry date="September 24, 8:36 AM" who={[TRUC, ANON]} />
              <Day $h={43}>WEDNESDAY</Day>
              <Entry date="September 22, 10:37 AM" who={[ANON]} sel />
              <Entry date="September 22, 8:15 AM" who={[TRUC, ANON]} />
              <Day $h={43} $line>TUESDAY</Day>
              <Entry date="September 21, 9:17 PM" who={[]} />
            </List>
            <Thumb />
          </ListArea>
          <PanelFooter>
            <CheckBox><MdCheck size={21} strokeWidth={1} stroke="#fff" /></CheckBox>
            Show changes
          </PanelFooter>
        </Panel>
      </Main>

      <Shelf>
        <RarIcon />
        <FileName>Lab1- WritingBlack....rar</FileName>
        <svg width="12" height="8" viewBox="0 0 12 8"><path d="M1 7l5-5.500L11 7" fill="none" stroke="#5f6368" strokeWidth="2" /></svg>
        <ShelfSep />
        <ShowAll>Hiển thị tất cả</ShowAll>
        <Cross s={12} w={1.9} c="#5f6368" />
      </Shelf>

      <TaskBar>
        <Start><WinLogo /></Start>
        <Search>
          <svg width="21" height="21" viewBox="0 0 21 21" fill="none" stroke="#e8e8e8" strokeWidth="1.500"><circle cx="13" cy="8" r="7" /><path d="M8 13L.6 20.400" /></svg>
          Type here to search
        </Search>
        <Apps>
          <AppCell><Explorer /></AppCell>
          <AppCell $active><Chrome /></AppCell>
          <AppCell><Teams /></AppCell>
          <AppCell><Edge /></AppCell>
          <AppCell><Notepad /></AppCell>
          <AppCell><Office l="W" a={["#41a5ee", "#2b7cd3", "#185abd", "#103f91", "#185abd"]} /></AppCell>
          <AppCell><Office l="X" a={["#2fb875", "#21a366", "#107c41", "#185c37", "#107c41"]} /></AppCell>
        </Apps>
        <Tray>
          <TrayIcon $w={32}><svg width="18" height="10" viewBox="0 0 18 10"><path d="M1 9l8-8 8 8" fill="none" stroke="#fff" strokeWidth="1.300" /></svg></TrayIcon>
          <TrayIcon $w={27}>
            <svg width="13" height="20" viewBox="0 0 13 20"><rect x="2.500" width="8" height="14" rx="1.500" fill="#fff" /><path d="M.6 10v3.500q0 3 3 3h6q3 0 3-3V10M6.500 16.500V19M3 19.500h7" fill="none" stroke="#fff" strokeWidth="1.200" /></svg>
          </TrayIcon>
          <TrayIcon $w={33}>
            <svg width="20" height="14" viewBox="0 0 20 14" fill="none" stroke="#fff"><rect x="4.500" y="2.500" width="13" height="10.500" /><rect x="7" y="4.500" width="10" height="7" fill="#fff" stroke="none" /><path d="M18.500 5.500v4M.5 1.500v3q0 1 1 1h2q1 0 1-1v-3zM2.500 5.500v5h2" /></svg>
          </TrayIcon>
          <TrayIcon $w={30}>
            <svg width="17" height="16" viewBox="0 0 17 16" fill="none" stroke="#fff" strokeWidth="1.200"><path d="M.8 15.500A15 15 0 0 1 15.500.8M4.500 15.500A11 11 0 0 1 15.500 4.800M8 15.500a8 8 0 0 1 7.500-7M11.500 15.500q.5-3 4-3.500" /><circle cx="14.500" cy="14.500" r="1.200" fill="#fff" stroke="none" /></svg>
          </TrayIcon>
          <Lang>ENG</Lang>
          <Clock>1:34 PM<br />9/24/2021</Clock>
          <Notice>
            <svg width="20" height="50" viewBox="0 0 20 50"><path d="M0 15h20v16h-8l-3 4v-4H0z" fill="#fff" /><path d="M4 19.500h12M4 23.500h12M4 27.500h8" stroke="#222" strokeWidth="1.200" /></svg>
            <NoticeBadge>1</NoticeBadge>
          </Notice>
          <DesktopEdge />
        </Tray>
      </TaskBar>
    </Screen>
  );
}
